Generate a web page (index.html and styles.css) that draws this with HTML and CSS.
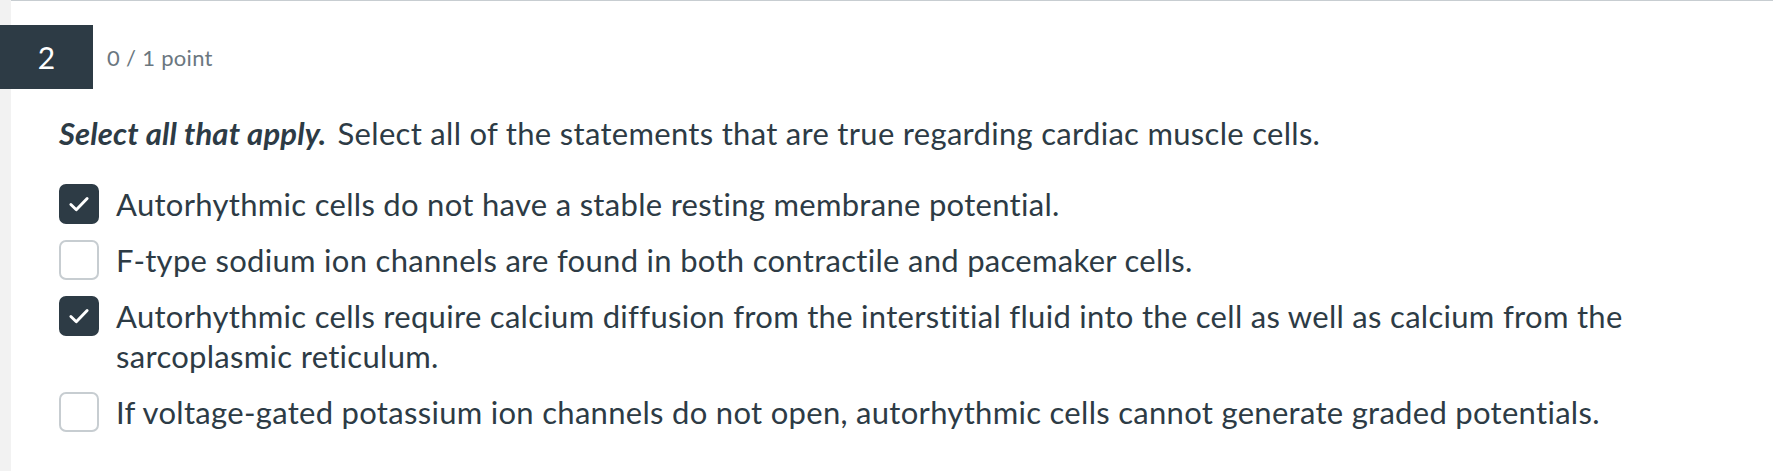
FILE: index.html
```html
<!DOCTYPE html>
<html lang="en">
<head>
<meta charset="utf-8">
<title>Question 2</title>
<link rel="stylesheet" href="styles.css">
</head>
<body>
<div class="page">
  <div class="question">
    <div class="q-header">
      <div class="q-number">2</div>
      <div class="q-points">0 / 1 point</div>
    </div>
    <div class="q-body">
      <p class="q-text"><strong><em>Select all that apply.</em></strong> Select all of the statements that are true regarding cardiac muscle cells.</p>
      <ul class="options">
        <li class="option">
          <span class="box checked"><svg viewBox="0 0 24 24" width="26" height="26"><path d="M4.5 12.5l5 4.8L19.5 7" fill="none" stroke="#fff" stroke-width="2.7" stroke-linecap="round" stroke-linejoin="round"/></svg></span>
          <span class="label">Autorhythmic cells do not have a stable resting membrane potential.</span>
        </li>
        <li class="option">
          <span class="box"></span>
          <span class="label">F-type sodium ion channels are found in both contractile and pacemaker cells.</span>
        </li>
        <li class="option">
          <span class="box checked"><svg viewBox="0 0 24 24" width="26" height="26"><path d="M4.5 12.5l5 4.8L19.5 7" fill="none" stroke="#fff" stroke-width="2.7" stroke-linecap="round" stroke-linejoin="round"/></svg></span>
          <span class="label">Autorhythmic cells require calcium diffusion from the interstitial fluid into the cell as well as calcium from the sarcoplasmic reticulum.</span>
        </li>
        <li class="option">
          <span class="box"></span>
          <span class="label">If voltage-gated potassium ion channels do not open, autorhythmic cells cannot generate graded potentials.</span>
        </li>
      </ul>
    </div>
  </div>
</div>
</body>
</html>
```

FILE: styles.css
```css
* { box-sizing: border-box; }
html, body { margin: 0; padding: 0; background: #ffffff; }
body {
  font-family: Lato, "Noto Sans", sans-serif;
  color: #2d3b45;
}
.page {
  border-left: 11px solid #f2f2f2;
  min-height: 471px;
}
.question {
  border-top: 1px solid #c7cdd1;
}
.q-header {
  display: flex;
  align-items: center;
  margin-top: 24px;
  margin-left: -11px;
}
.q-number {
  width: 93px;
  height: 64px;
  background: #2d3b45;
  color: #ffffff;
  font-size: 30px;
  font-weight: 400;
  display: flex;
  align-items: center;
  justify-content: center;
}
.q-points {
  margin-left: 14px;
  font-size: 22px;
  letter-spacing: 0.3px;
  color: #6b7780;
}
.q-body {
  padding: 24px 48px 0 48px;
}
.q-text {
  margin: 0;
  font-size: 31px;
  letter-spacing: 0.3px;
  line-height: 40px;
}
.q-text strong {
  font-weight: 700;
  letter-spacing: 0.15px;
  margin-right: 3px;
}
.options {
  list-style: none;
  margin: 31px 0 0 0;
  padding: 0;
  display: flex;
  flex-direction: column;
  gap: 16px;
}
.option {
  display: flex;
  align-items: flex-start;
  gap: 17px;
  font-size: 31px;
  letter-spacing: 0.3px;
  line-height: 40px;
}
.box {
  flex: 0 0 40px;
  width: 40px;
  height: 40px;
  border: 2px solid #c7cdd1;
  border-radius: 7px;
  background: #fff;
  display: flex;
  align-items: center;
  justify-content: center;
}
.box.checked {
  background: #2d3b45;
  border-color: #2d3b45;
}
.box svg { display: block; }
```
